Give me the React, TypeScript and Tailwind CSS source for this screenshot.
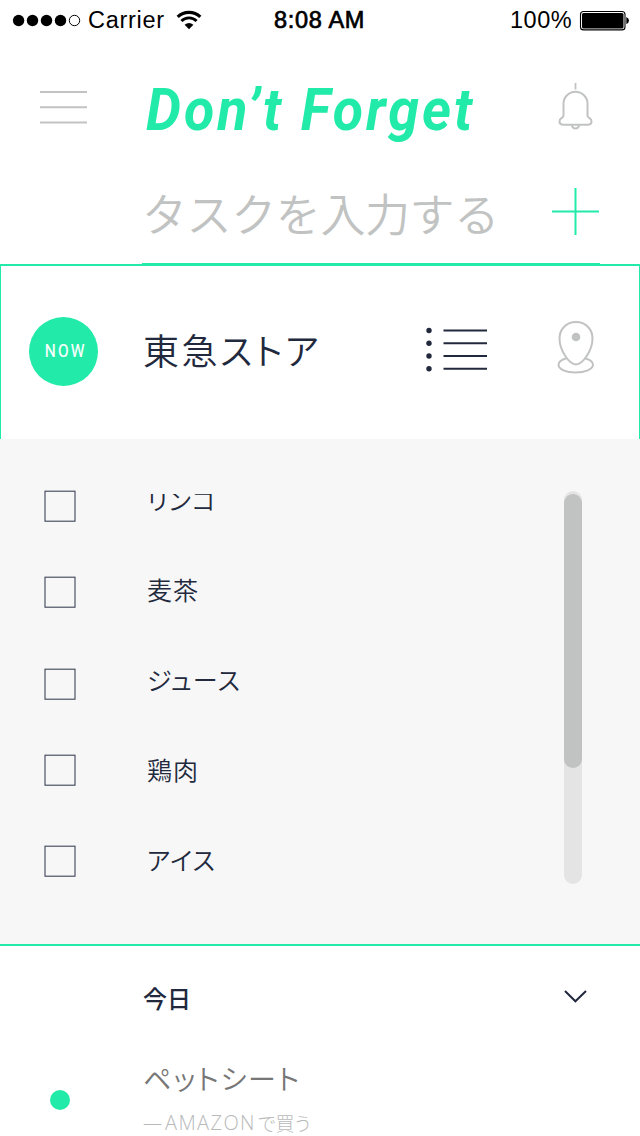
import React from "react";

const JP = "font-['Noto_Sans_CJK_JP',sans-serif] whitespace-nowrap";

function StatusBar() {
  return (
    <div className="flex h-10 items-center text-[23.5px] leading-10 text-black font-['Liberation_Sans',sans-serif]">
      <svg className="ml-3 shrink-0" width="70" height="40" viewBox="12 0 70 40">
        {[18.6, 32.5, 46.5, 60.5].map((x) => (
          <circle key={x} cx={x} cy="20.5" r="5.7" />
        ))}
        <circle cx="74.5" cy="20.5" r="5.2" fill="none" stroke="#000" strokeWidth="1" />
      </svg>
      <span className="ml-[6px] w-[84px] whitespace-nowrap tracking-[0.7px]">Carrier</span>
      <svg className="ml-1 shrink-0" width="26" height="40" viewBox="176 0 26 40">
        <path d="M177.7 16.8a16.5 16.5 0 0 1 22.6 0" fill="none" stroke="#000" strokeWidth="3.2" />
        <path d="M181.4 21a10.8 10.8 0 0 1 15.2 0" fill="none" stroke="#000" strokeWidth="2.9" />
        <path d="M184.6 24.8a7 7 0 0 1 8.8 0L189 29.2Z" />
      </svg>
      <span className="ml-[72px] w-[100px] whitespace-nowrap tracking-[0.7px] [-webkit-text-stroke:0.7px_#000]">8:08 AM</span>
      <span className="ml-[136px] w-[64px] whitespace-nowrap tracking-[0.5px]">100%</span>
      <svg className="ml-[4px] shrink-0" width="52" height="40" viewBox="578 0 52 40">
        <rect x="580.5" y="11.5" width="44.5" height="18.4" rx="3" fill="none" stroke="#000" strokeWidth="1.1" />
        <rect x="582" y="13" width="41.5" height="15.4" rx="1.5" />
        <path d="M626.3 17q2.7 1 2.7 3.5t-2.7 3.5Z" />
      </svg>
    </div>
  );
}

function Header() {
  return (
    <header className="flex h-[130px] items-start">
      <button className="ml-10 mt-[50px]" aria-label="Menu">
        <svg width="48" height="36" viewBox="40 90 48 36" fill="none" stroke="#c1c3c2" strokeWidth="2">
          <path d="M40 92h47M40 107.3h47M40 122.6h47" />
        </svg>
      </button>
      <h1 className="ml-[58px] mt-[35px] w-[400px] origin-left scale-x-[0.94] whitespace-nowrap font-['Roboto',sans-serif] text-[59px] leading-[70px] font-bold italic tracking-[3.2px] text-[#22eba9]">
        Don’t Forget
      </h1>
      <button className="ml-[11px] mt-[40px] shrink-0" aria-label="Notifications">
        <svg width="38" height="52" viewBox="557 80 38 52" fill="none" stroke="#c1c3c2" strokeWidth="2">
          <path d="M575.5 83v6.5" strokeWidth="1.8" />
          <path d="M563.5 115.5v-11.8a12 12 0 0 1 24 0v11.8q0 1.6 2 2.7 2 1.2 2 3.4 0 3.1-3.2 3.1h-25.6q-3.2 0-3.2-3.1 0-2.2 2-3.4 2-1.1 2-2.7Z" />
          <path d="M571.8 125.2q.8 3.3 3.7 3.3t3.7-3.3" />
        </svg>
      </button>
    </header>
  );
}

function TaskInput() {
  return (
    <div className="ml-[142px] flex h-[94px] w-[458px] items-start justify-between border-b border-[#22eba9]">
      <span className={`${JP} mt-[11px] text-[45px] leading-[64px] font-[350] tracking-[-0.4px] text-[#c1c3c2]`}>タスクを入力する</span>
      <svg className="mt-[17px]" width="48" height="50" viewBox="552 187 48 50" fill="none" stroke="#22eba9" strokeWidth="2">
        <path d="M552 211.5h47M575.5 188v47" />
      </svg>
    </div>
  );
}

function CurrentTask() {
  return (
    <div className="flex h-[175px] items-center border-x border-t-2 border-[#22eba9] pb-[3px]">
      <div className="ml-7 flex size-[69px] shrink-0 items-center justify-center rounded-full bg-[#22eba9] font-['Roboto',sans-serif] text-[17.5px] tracking-[2.4px] text-white">
        <span className="ml-[4px] scale-x-[0.88] pt-px [-webkit-text-stroke:0.2px_#fff]">NOW</span>
      </div>
      <span className={`${JP} ml-[45px] mt-[-4px] w-[270px] text-[36px] leading-[52px] font-[350] tracking-[2.5px] text-[#22293d] [font-feature-settings:'palt']`}>東急ストア</span>
      <svg className="ml-[12px] mt-[-2px] shrink-0" width="64" height="46" viewBox="425 327 64 46" stroke="#22293d" strokeWidth="2">
        {[330.5, 343.2, 356, 368.7].map((y) => (
          <g key={y}>
            <circle cx="429" cy={y} r="2.7" fill="#22293d" stroke="none" />
            <path d={`M443.5 ${y}h43.5`} />
          </g>
        ))}
      </svg>
      <svg className="ml-[67px] mt-[-9px] shrink-0" width="40" height="56" viewBox="556 319 40 56" fill="none" stroke="#c1c3c2" strokeWidth="2">
        <path d="M576 322c-9.5 0-16.5 7.2-16.5 16.5 0 11.5 9.5 26 16.5 26s16.5-14.5 16.5-26c0-9.3-7-16.5-16.5-16.5Z" />
        <circle cx="576" cy="337" r="4.3" fill="#c1c3c2" stroke="none" />
        <path d="M566 358.5c-5 1.3-7.5 3.7-7.5 6.3 0 4.5 7.5 7.7 17 7.7s17.5-3.2 17.5-7.7c0-2.6-2.5-5-7.5-6.3" />
      </svg>
    </div>
  );
}

function Checkbox() {
  return (
    <svg className="block" width="34" height="34" viewBox="0 0 34 34" fill="none" stroke="#3c4456" strokeWidth="1.1">
      <rect x="2" y="2.2" width="30" height="30" />
    </svg>
  );
}

const items = ["リンコ", "麦茶", "ジュース", "鶏肉", "アイス"];

function Checklist() {
  return (
    <div className="flex h-[505px] items-start bg-[#f7f7f7] pt-[50px]">
      <div className="ml-[43px] flex flex-col">
        <Checkbox />
        <div className="mt-[52px]"><Checkbox /></div>
        <div className="mt-[57.7px]"><Checkbox /></div>
        <div className="mt-[52.4px]"><Checkbox /></div>
        <div className="mt-[57.4px]"><Checkbox /></div>
      </div>
      <div className="ml-[70px] mt-[5px] h-[400px] w-[220px] overflow-hidden">
        <ul className="-mt-[40px]">
          {items.map((t) => (
            <li key={t} className={`${JP} h-[90px] text-[25px] leading-[90px] font-[350] tracking-[1.1px] text-[#22293d] [font-feature-settings:'palt']`}>{t}</li>
          ))}
        </ul>
      </div>
      <div className="ml-[197px] mt-[2px] h-[393px] w-[18px] rounded-full bg-[#e4e4e4] pt-[3px]">
        <div className="h-[274px] rounded-full bg-[#c1c3c2]" />
      </div>
    </div>
  );
}

function Today() {
  return (
    <section className="h-[192px] overflow-hidden border-t-2 border-[#22eba9]">
      <div className="flex h-[104px] items-center pl-[143px]">
        <h2 className={`${JP} w-[420px] text-[24px] leading-9 font-medium text-[#22293d]`}>今日</h2>
        <svg className="mt-[-4px]" width="26" height="16" viewBox="563 988 26 16" fill="none" stroke="#22293d" strokeWidth="2">
          <path d="M565 991l10.4 10.3L586 991" />
        </svg>
      </div>
      <div className="flex items-start">
        <div className="ml-[50px] mt-[40px] size-5 shrink-0 rounded-full bg-[#22eba9]" />
        <div className="ml-[73px]">
          <p className={`${JP} mt-[8px] text-[28px] leading-10 font-[350] tracking-[1.8px] text-[#777777] [font-feature-settings:'palt']`}>ペットシート</p>
          <p className={`${JP} mt-[11px] flex text-[19px] leading-7 font-light text-[#b8baba] [font-feature-settings:'palt']`}>
            <span className="w-[22px] font-['Open_Sans',sans-serif]">—</span>
            <span className="w-[93px] font-['Open_Sans',sans-serif] text-[20px] tracking-[1.4px]">AMAZON</span>
            <span>で買う</span>
          </p>
        </div>
      </div>
    </section>
  );
}

export default function App() {
  return (
    <main className="h-[1136px] w-[640px] overflow-hidden bg-white">
      <StatusBar />
      <Header />
      <TaskInput />
      <CurrentTask />
      <Checklist />
      <Today />
    </main>
  );
}
